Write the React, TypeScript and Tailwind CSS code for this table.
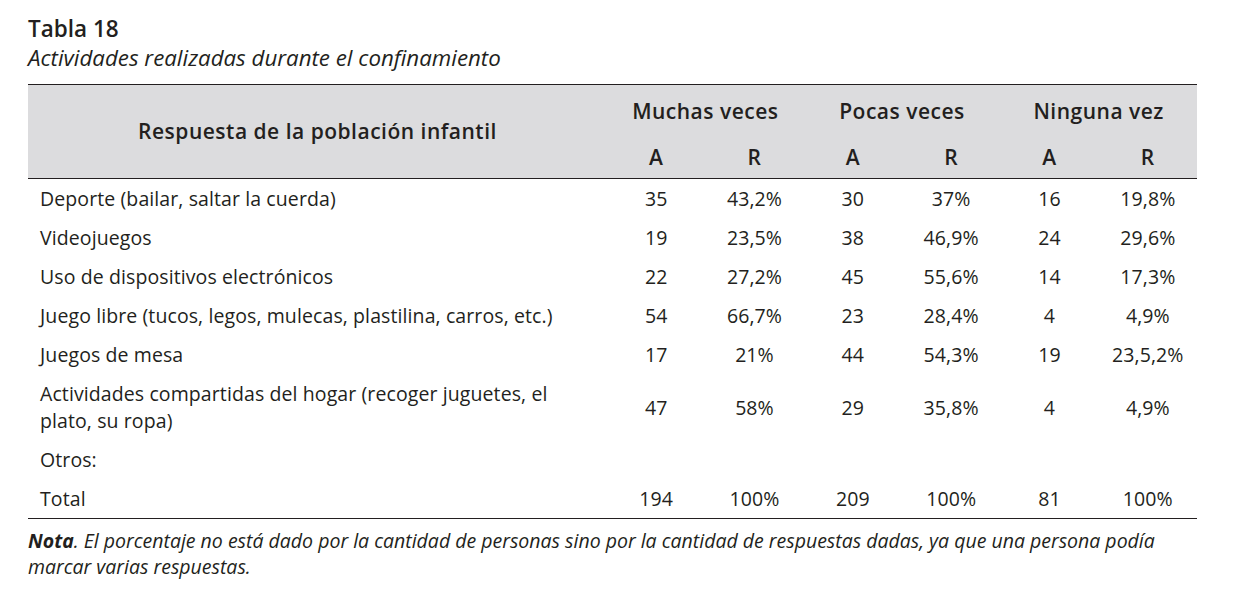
const rows: { label: React.ReactNode; v: string[] }[] = [
  { label: 'Deporte (bailar, saltar la cuerda)', v: ['35', '43,2%', '30', '37%', '16', '19,8%'] },
  { label: 'Videojuegos', v: ['19', '23,5%', '38', '46,9%', '24', '29,6%'] },
  { label: 'Uso de dispositivos electrónicos', v: ['22', '27,2%', '45', '55,6%', '14', '17,3%'] },
  { label: 'Juego libre (tucos, legos, mulecas, plastilina, carros, etc.)', v: ['54', '66,7%', '23', '28,4%', '4', '4,9%'] },
  { label: 'Juegos de mesa', v: ['17', '21%', '44', '54,3%', '19', '23,5,2%'] },
  {
    label: (
      <>
        Actividades compartidas del hogar (recoger juguetes, el
        <br />
        plato, su ropa)
      </>
    ),
    v: ['47', '58%', '29', '35,8%', '4', '4,9%'],
  },
  { label: 'Otros:', v: ['', '', '', '', '', ''] },
  { label: 'Total', v: ['194', '100%', '209', '100%', '81', '100%'] },
];

export default function App() {
  return (
    <div className="w-[1252px] h-[594px] bg-white text-[#231f20] font-['Open_Sans',sans-serif] pl-[28px] pt-[14px]">
      <h1 className="text-[22.5px] leading-[29px] font-semibold">Tabla 18</h1>
      <p className="text-[22.3px] leading-[29px] italic">Actividades realizadas durante el confinamiento</p>

      <div className="mt-[12px] w-[1169px] border-t border-b border-[#231f20]">
        {/* header */}
        <div className="grid grid-cols-[579px_repeat(6,1fr)] grid-rows-[52px_41px] bg-[#dcdcde] border-b border-[#231f20] text-[21px] tracking-[0.5px] font-semibold">
          <div className="row-span-2 flex items-center justify-center">Respuesta de la población infantil</div>
          <div className="col-span-2 flex items-center justify-center pt-[2px]">Muchas veces</div>
          <div className="col-span-2 flex items-center justify-center pt-[2px]">Pocas veces</div>
          <div className="col-span-2 flex items-center justify-center pt-[2px]">Ninguna vez</div>
          {['A', 'R', 'A', 'R', 'A', 'R'].map((h, i) => (
            <div key={i} className="flex items-center justify-center">
              {h}
            </div>
          ))}
        </div>

        {/* body */}
        <div className="text-[19.5px] leading-[27px] tracking-[0.1px]">
          {rows.map((r, i) => (
            <div key={i} className="grid grid-cols-[579px_repeat(6,1fr)] py-[6px]">
              <div className="pl-[12px] whitespace-nowrap">{r.label}</div>
              {r.v.map((c, j) => (
                <div key={j} className="flex items-center justify-center">
                  {c}
                </div>
              ))}
            </div>
          ))}
        </div>
      </div>

      <p className="mt-[9px] text-[19.5px] leading-[26px] italic">
        <span className="font-bold">Nota</span>. El porcentaje no está dado por la cantidad de personas sino por la cantidad de respuestas dadas, ya que una persona podía
        <br />
        marcar varias respuestas.
      </p>
    </div>
  );
}
